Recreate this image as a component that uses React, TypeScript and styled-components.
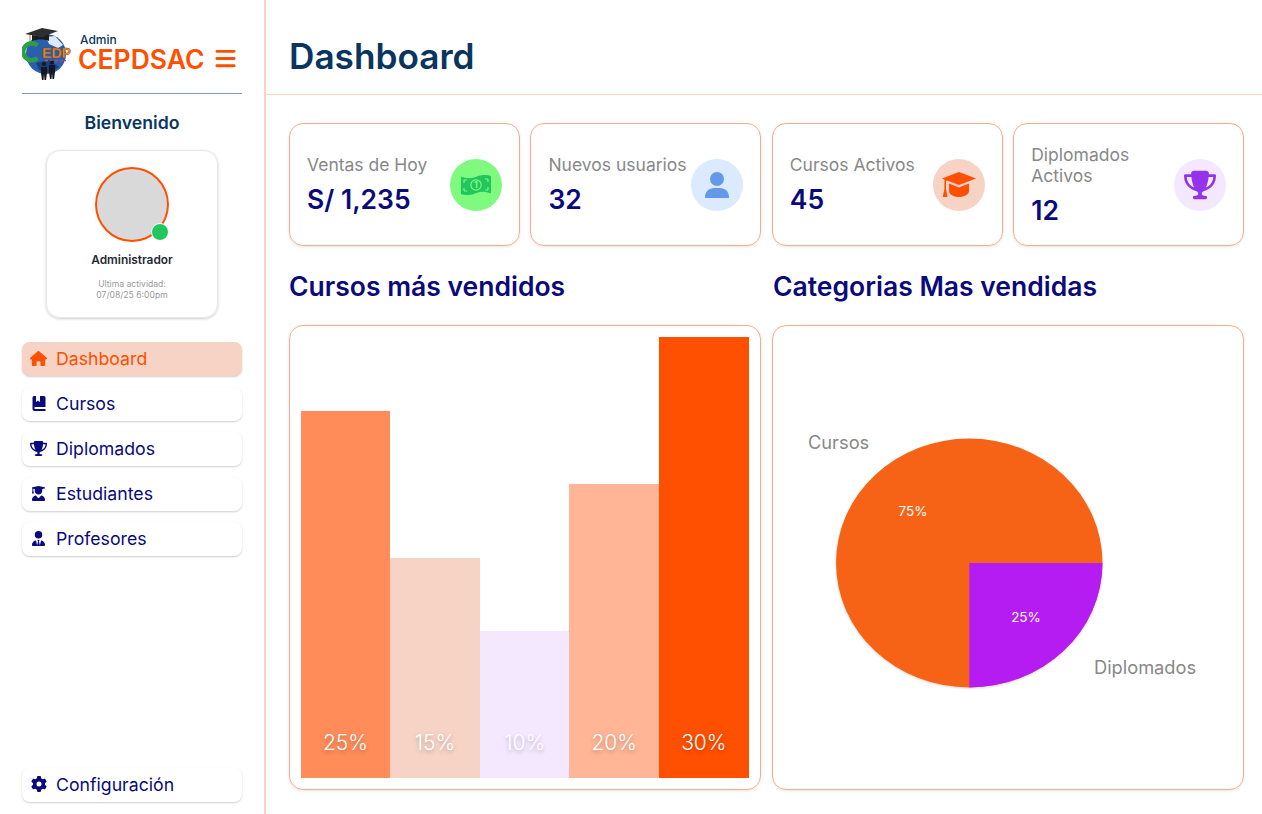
import React from 'react';
import styled, { createGlobalStyle } from 'styled-components';
import { FaBars, FaGear, FaHouse, FaTrophy, FaUserGraduate, FaUserTie } from 'react-icons/fa6';

const GlobalStyle = createGlobalStyle`
    html, body {
        margin: 0;
        padding: 0;
        background: #fff;
        font-family: Inter, "Liberation Sans", sans-serif;
    }
    * {
        box-sizing: border-box;
    }
`

const Page = styled.div`
    display: flex;
    width: 1262px;
    height: 814px;
    overflow: hidden;
`

const Sidebar = styled.aside`
    width: 266px;
    flex-shrink: 0;
    border-right: 2px solid #f8d3c5;
    padding: 0 22px 12px 22px;
    display: flex;
    flex-direction: column;
`

const Brand = styled.div`
    height: 94px;
    border-bottom: 1px solid #7f9bbf;
    display: flex;
    align-items: flex-start;
    padding-top: 27px;
    gap: 6px;
`

const BrandText = styled.div`
    display: flex;
    flex-direction: column;
    margin-top: 7px;
`

const BrandAdmin = styled.span`
    font-size: 12px;
    line-height: 12px;
    font-weight: 500;
    color: #0a3560;
    margin-left: 2px;
`

const BrandName = styled.span`
    font-size: 26.5px;
    line-height: 26px;
    font-weight: 600;
    color: #ff4f00;
`

const MenuToggle = styled.span`
    color: #ff4f00;
    font-size: 23px;
    display: flex;
    margin: 20px 0 0 3px;
`

const Welcome = styled.div`
    margin-top: 18px;
    text-align: center;
    font-size: 17.7px;
    line-height: 22px;
    font-weight: 600;
    color: #0a3560;
`

const ProfileCard = styled.div`
    width: 172px;
    height: 168px;
    margin: 16px auto 0;
    border: 1px solid #e6e6e6;
    border-radius: 14px;
    box-shadow: 0 1px 3px rgba(0, 0, 0, 0.2);
    display: flex;
    flex-direction: column;
    align-items: center;
    padding-top: 16px;
`

const Avatar = styled.div`
    position: relative;
    width: 74px;
    height: 75px;
    border-radius: 50%;
    background: #d9d9d9;
    border: 2px solid #ff4f00;
`

const OnlineDot = styled.span`
    position: absolute;
    right: -2px;
    bottom: -1px;
    width: 18px;
    height: 18px;
    border-radius: 50%;
    background: #22c55e;
    border: 1.5px solid #fff;
`

const ProfileName = styled.div`
    margin-top: 11px;
    font-size: 11.9px;
    line-height: 14px;
    font-weight: 600;
    color: #1f2937;
`

const LastActivity = styled.div`
    margin-top: 12px;
    font-size: 8.6px;
    line-height: 11px;
    color: #9a9a9a;
    text-align: center;
`

const Nav = styled.nav`
    margin-top: 24px;
    display: flex;
    flex-direction: column;
    gap: 11px;
`

const NavItem = styled.div<{ $active?: boolean }>`
    height: 34px;
    border-radius: 8px;
    display: flex;
    align-items: center;
    padding: 0 0 2px 8px;
    gap: 9px;
    font-size: 17.7px;
    color: ${(p) => (p.$active ? '#ff4f00' : '#0a0a7a')};
    background: ${(p) => (p.$active ? '#f6d3c5' : '#fff')};
    box-shadow: 0 1px 2px rgba(0, 0, 0, 0.2);
`

const NavIcon = styled.span`
    width: 17px;
    display: flex;
    justify-content: center;
    font-size: 15px;
`

const SettingsItem = styled(NavItem)`
    margin-top: auto;
`

const Main = styled.main`
    flex: 1;
    min-width: 0;
    display: flex;
    flex-direction: column;
`

const Header = styled.header`
    height: 95px;
    border-bottom: 1px solid #fbd5c5;
    padding: 18px 23px 0;
    display: flex;
    align-items: center;
`

const PageTitle = styled.h1`
    margin: 0;
    font-size: 35.2px;
    font-weight: 600;
    color: #0a3560;
`

const Content = styled.div`
    padding: 28px 18px 24px 23px;
    display: flex;
    flex-direction: column;
    flex: 1;
`

const Stats = styled.div`
    display: grid;
    grid-template-columns: repeat(4, 1fr);
    gap: 10.67px;
`

const StatCard = styled.div`
    height: 123px;
    border: 1px solid #f8ab8c;
    border-radius: 14px;
    box-shadow: 0 1px 3px rgba(0, 0, 0, 0.1);
    display: flex;
    align-items: center;
    justify-content: space-between;
    padding: 1px 17px 0;
`

const StatLabel = styled.div`
    font-size: 17.5px;
    line-height: 21px;
    color: #888;
`

const StatValue = styled.div`
    margin-top: 8px;
    font-size: 26.5px;
    line-height: 33px;
    font-weight: 600;
    color: #0a0a7a;
`

const StatIcon = styled.div<{ $bg: string; $fg: string }>`
    width: 52px;
    height: 52px;
    flex-shrink: 0;
    margin-top: -1px;
    border-radius: 50%;
    background: ${(p) => p.$bg};
    color: ${(p) => p.$fg};
    display: flex;
    align-items: center;
    justify-content: center;
    font-size: 30px;
`

const Charts = styled.div`
    margin-top: 23px;
    flex: 1;
    display: grid;
    grid-template-columns: repeat(2, 1fr);
    grid-template-rows: auto 1fr;
    column-gap: 11px;
    row-gap: 21px;
`

const SectionTitle = styled.h2<{ $inset?: boolean }>`
    margin: 0;
    padding-left: ${(p) => (p.$inset ? '1px' : '0')};
    font-size: 26.5px;
    line-height: 35px;
    font-weight: 600;
    color: #0a0a7a;
`

const ChartCard = styled.div`
    border: 1px solid #f8ab8c;
    border-radius: 14px;
    box-shadow: 0 1px 3px rgba(0, 0, 0, 0.1);
    height: 465px;
`

const BarsCard = styled(ChartCard)`
    padding: 11px 11.4px 11px 10.6px;
    display: flex;
    align-items: flex-end;
`

const Bar = styled.div<{ $color: string }>`
    flex: 1;
    background: ${(p) => p.$color};
    display: flex;
    align-items: flex-end;
    justify-content: center;
    padding-bottom: 21px;
    font-size: 21px;
    line-height: 28px;
    font-weight: 350;
    color: #fff;
    text-shadow: 0 2px 4px rgba(0, 0, 0, 0.25);
`

const PieCard = styled(ChartCard)`
    display: flex;
`

const PieSvg = styled.svg`
    display: block;
    font-family: Inter, "Liberation Sans", sans-serif;
`

const bars = [
    { pct: 25, color: '#ff8c59', height: 367 },
    { pct: 15, color: '#f6d3c5', height: 220 },
    { pct: 10, color: '#f3e8ff', height: 147 },
    { pct: 20, color: '#ffb596', height: 294 },
    { pct: 30, color: '#ff4f00', height: 441 },
];

// book with a bookmark notch, the packages only have it in other shapes
const BookIcon = () => (
    <svg width="14" height="15" viewBox="0 0 14 15" fill="currentColor">
        <path d="M2 0 H4 V6 L6 4.4 L8 6 V0 H12 A1.5 1.5 0 0 1 13.5 1.5 V11 H3 A1.2 1.2 0 0 0 3 13 H13.5 V15 H2.5 A2.2 2.2 0 0 1 0.5 13 V1.5 A1.5 1.5 0 0 1 2 0 Z" />
    </svg>
);

const MoneyIcon = () => (
    <svg width="32" height="26" viewBox="0 0 32 26">
        <path d="M1 4.5 C7 7 12 6.5 17 4.5 C22 2.5 27 2.5 31 4 V21.5 C25 19 20 19.5 15 21.5 C10 23.5 5 23.5 1 22 Z" fill="#22c55e" />
        <circle cx="16" cy="13" r="5.2" fill="none" stroke="#7ffa7f" strokeWidth="1.2" />
        <text x="16" y="16.3" fontSize="9" fontWeight="700" fill="#7ffa7f" textAnchor="middle">1</text>
        <path d="M4 8 V11 M4 8 H7 M28 7 V10 M28 7 H25 M4 19 V16 M4 19 H7 M28 18 V15 M28 18 H25" stroke="#7ffa7f" strokeWidth="1.2" fill="none" />
    </svg>
);

const PersonIcon = () => (
    <svg width="24" height="28" viewBox="0 0 24 28" fill="#6498e8">
        <circle cx="12" cy="8" r="7" />
        <path d="M0 26.5 C0 20.5 4 17 9 17 H15 C20 17 24 20.5 24 26.5 V27 H0 Z" />
    </svg>
);

const CapIcon = () => (
    <svg width="34" height="26" viewBox="0 0 34 26" fill="#ff4f00">
        <path d="M17 0 L34 6.5 L17 13 L5 8.5 V9 L0 6.5 Z" />
        <path d="M7 11.5 L17 15.5 L27 11.5 V19 C27 22.5 22 25 17 25 C12 25 7 22.5 7 19 Z" />
        <path d="M2.4 8 H4 V17 L5.5 25 H0.8 L2.4 17 Z" />
    </svg>
);

const navItems = [
    { label: 'Cursos', icon: <BookIcon /> },
    { label: 'Diplomados', icon: <FaTrophy size={17} /> },
    { label: 'Estudiantes', icon: <FaUserGraduate /> },
    { label: 'Profesores', icon: <FaUserTie /> },
];

const Logo = () => (
    <svg width="50" height="53" viewBox="0 0 50 53">
        <circle cx="24" cy="27" r="20" fill="#2a5fb0" />
        <path d="M24 10 L33 9 L41 18 L36 21 L27 17 Z" fill="#dfe8f2" />
        <path d="M14 36 L27 33 L37 40 L27 46 L17 43 Z" fill="#16407f" />
        <path d="M3 7 L20 1 L36 4 L20 10 Z" fill="#2e2e2e" />
        <path d="M10 8 L10 14 C15 12 23 12 27 14 L27 7 L20 10 Z" fill="#1c1c1c" />
        <path d="M8 8 L8 19" stroke="#b5762e" strokeWidth="1" />
        <path d="M15.5 18.5 A8.5 8.5 0 1 0 15.5 31" fill="none" stroke="#2e9e45" strokeWidth="4.5" />
        <text x="20" y="31" fontSize="15" fontWeight="800" fontFamily="Liberation Sans, sans-serif" fill="#f08a24" stroke="#7a3d0a" strokeWidth="0.4" textLength="29" lengthAdjust="spacingAndGlyphs">EDP</text>
        <path d="M23 33.5 H44" stroke="#c9455a" strokeWidth="1.5" strokeDasharray="3 2" />
        <g fill="#16161c">
            <circle cx="22" cy="37" r="2" />
            <path d="M19 40 H25 V46 L24 53 H22.5 L22 47 L21.5 53 H20 L19 46 Z" />
            <circle cx="30" cy="35.5" r="2" />
            <path d="M27 38 H33 V45 L32 52 H30.5 L30 46 L29.5 52 H28 L27 45 Z" />
        </g>
    </svg>
);

const PieChart = () => (
    <PieSvg width="470" height="463" viewBox="0 0 470 463">
        <defs>
            <filter id="pieShadow" x="-5%" y="-5%" width="110%" height="110%">
                <feDropShadow dx="0" dy="1" stdDeviation="1" floodOpacity="0.15" />
            </filter>
        </defs>
        <g filter="url(#pieShadow)">
            <ellipse cx="196.25" cy="237" rx="133.25" ry="124.5" fill="#f66416" />
            <path d="M196.25 237 H329.5 A133.25 124.5 0 0 1 196.25 361.5 Z" fill="#b41ff2" />
        </g>
        <text x="35" y="123" fontSize="18.25" fill="#888">Cursos</text>
        <text x="321" y="348" fontSize="18.25" fill="#888">Diplomados</text>
        <text x="140" y="190" fontSize="13.5" fill="#fff" textAnchor="middle">75%</text>
        <text x="253" y="296" fontSize="13.5" fill="#fff" textAnchor="middle">25%</text>
    </PieSvg>
);

export default function App() {
    return (
        <Page>
            <GlobalStyle />
            <Sidebar>
                <Brand>
                    <Logo />
                    <BrandText>
                        <BrandAdmin>Admin</BrandAdmin>
                        <BrandName>CEPDSAC</BrandName>
                    </BrandText>
                    <MenuToggle><FaBars /></MenuToggle>
                </Brand>
                <Welcome>Bienvenido</Welcome>
                <ProfileCard>
                    <Avatar><OnlineDot /></Avatar>
                    <ProfileName>Administrador</ProfileName>
                    <LastActivity>Ultima actividad:<br />07/08/25 6:00pm</LastActivity>
                </ProfileCard>
                <Nav>
                    <NavItem $active><NavIcon><FaHouse size={17} /></NavIcon>Dashboard</NavItem>
                    {navItems.map((item) => (
                        <NavItem key={item.label}><NavIcon>{item.icon}</NavIcon>{item.label}</NavItem>
                    ))}
                </Nav>
                <SettingsItem><NavIcon><FaGear size={16} /></NavIcon>Configuración</SettingsItem>
            </Sidebar>
            <Main>
                <Header><PageTitle>Dashboard</PageTitle></Header>
                <Content>
                    <Stats>
                        <StatCard>
                            <div><StatLabel>Ventas de Hoy</StatLabel><StatValue>S/ 1,235</StatValue></div>
                            <StatIcon $bg="#7ffa7f" $fg="#22c55e"><MoneyIcon /></StatIcon>
                        </StatCard>
                        <StatCard>
                            <div><StatLabel>Nuevos usuarios</StatLabel><StatValue>32</StatValue></div>
                            <StatIcon $bg="#dbeafe" $fg="#6498e8"><PersonIcon /></StatIcon>
                        </StatCard>
                        <StatCard>
                            <div><StatLabel>Cursos Activos</StatLabel><StatValue>45</StatValue></div>
                            <StatIcon $bg="#f6d3c5" $fg="#ff4f00"><CapIcon /></StatIcon>
                        </StatCard>
                        <StatCard>
                            <div><StatLabel>Diplomados<br />Activos</StatLabel><StatValue>12</StatValue></div>
                            <StatIcon $bg="#f3e8ff" $fg="#9333ea"><FaTrophy size={32} /></StatIcon>
                        </StatCard>
                    </Stats>
                    <Charts>
                        <SectionTitle>Cursos más vendidos</SectionTitle>
                        <SectionTitle $inset>Categorias Mas vendidas</SectionTitle>
                        <BarsCard>
                            {bars.map((b) => (
                                <Bar key={b.pct} $color={b.color} style={{ height: b.height }}>{b.pct}%</Bar>
                            ))}
                        </BarsCard>
                        <PieCard><PieChart /></PieCard>
                    </Charts>
                </Content>
            </Main>
        </Page>
    );
}
